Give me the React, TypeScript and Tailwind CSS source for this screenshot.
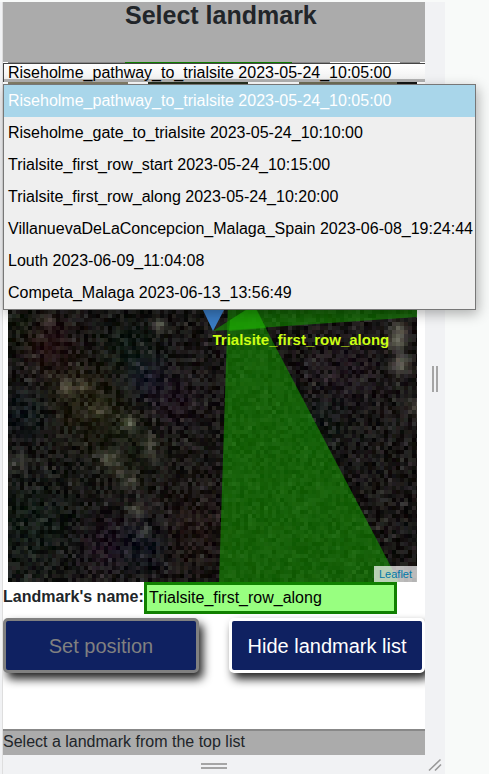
import { useState } from "react";

const landmarks = [
  "Riseholme_pathway_to_trialsite 2023-05-24_10:05:00",
  "Riseholme_gate_to_trialsite 2023-05-24_10:10:00",
  "Trialsite_first_row_start 2023-05-24_10:15:00",
  "Trialsite_first_row_along 2023-05-24_10:20:00",
  "VillanuevaDeLaConcepcion_Malaga_Spain 2023-06-08_19:24:44",
  "Louth 2023-06-09_11:04:08",
  "Competa_Malaga 2023-06-13_13:56:49",
];

const MAP_W = 409;
const MAP_H = 500;
const CELL = 4;

// Bright patches of ground: x, y, radius, strength
const patches = [
  [38, 236, 7, 42], [150, 241, 7, 65], [56, 303, 8, 60], [74, 302, 7, 52],
  [90, 326, 11, 32], [119, 338, 8, 55], [140, 358, 7, 45], [99, 374, 10, 55],
  [120, 398, 9, 40], [127, 426, 7, 55], [135, 448, 7, 48], [9, 378, 9, 34],
  [387, 258, 9, 72], [391, 280, 10, 68], [407, 322, 9, 55], [388, 244, 8, 60],
  [110, 388, 8, 30], [142, 373, 10, 25],
];

// Coloured casts over the dark ground: x, y, radius, red, green, blue
const casts = [
  [38, 260, 26, 13, -4, 1], [70, 315, 40, 6, 4, -6], [135, 295, 20, -2, 0, 13],
  [20, 440, 50, -6, 4, 0], [95, 460, 26, 5, -4, 7], [135, 460, 26, -8, 0, 8],
  [160, 320, 28, 4, -4, 7], [310, 340, 30, -4, 4, 1], [330, 290, 40, 4, -1, 5],
  [15, 330, 26, -7, 1, 6], [120, 350, 45, 0, 5, -3], [180, 450, 40, 5, -2, -3],
  [120, 265, 30, -5, 5, 1], [12, 245, 24, -3, 5, -3],
];

function buildTerrain() {
  let seed = 20230524;
  const rand = () => {
    seed = (seed * 1664525 + 1013904223) % 4294967296;
    return seed / 4294967296;
  };
  const groups = new Map<string, string>();
  for (let y = 220; y < MAP_H; y += CELL) {
    for (let x = 0; x < MAP_W; x += CELL) {
      let v = 2 + rand() * 36 + (rand() > 0.9 ? 16 : 0);
      let r = 3 + rand() * 5 - 2;
      let g = 1 + rand() * 5 - 2;
      let b = rand() * 5 - 2;
      for (const [px, py, rad, s] of patches) {
        const d = ((x - px) ** 2 + (y - py) ** 2) / (rad * rad);
        if (d < 4) {
          const k = s * Math.exp(-d * 1.2);
          v += k;
          b -= k * 0.15;
        }
      }
      for (const [px, py, rad, cr, cg, cb] of casts) {
        const k = Math.exp(-((x - px) ** 2 + (y - py) ** 2) / (rad * rad));
        r += cr * k;
        g += cg * k;
        b += cb * k;
      }
      const q = (n: number) => Math.max(0, Math.round(n / 4) * 4);
      const fill = `rgb(${q(v + r)},${q(v + g)},${q(v + b)})`;
      groups.set(fill, (groups.get(fill) ?? "") + `M${x} ${y}h4v4h-4z`);
    }
  }
  return [...groups.entries()];
}

const terrain = buildTerrain();

function LandmarkMap() {
  return (
    <div className="relative mr-2 ml-[5px] h-[500px] overflow-hidden bg-black">
      <svg
        className="block h-full w-full"
        viewBox={`0 0 ${MAP_W} ${MAP_H}`}
        preserveAspectRatio="xMidYMid slice"
        role="img"
        aria-label="Satellite map"
      >
        <rect width={MAP_W} height={MAP_H} fill="#151614" />
        <rect width="120" height="3" fill="#85806a" />
        <rect x="120" width="20" height="3" fill="#fff" />
        <rect x="140" width="100" height="3" fill="#27301f" />
        <rect x="240" width="51" height="3" fill="#fff" />
        <rect x="291" width="98" height="3" fill="#706f58" />
        <g shapeRendering="crispEdges">
          {terrain.map(([fill, d]) => (
            <path key={fill} d={d} fill={fill} />
          ))}
        </g>
        <polygon points="220,220 211,500 391,500 244,220" fill="#149600" fillOpacity="0.58" />
        <polygon points="205,249 250,220 409,220 409,235" fill="#149600" fillOpacity="0.58" />
        <polygon points="222,238 238,228 249,228 258,246 221,249" fill="#24b408" fillOpacity="0.5" />
        <polygon points="194,226 217,226 205,249" fill="#3a7cc4" />
      </svg>
      <span className="absolute top-[249px] left-1/2 text-[15px] leading-[18px] font-bold whitespace-nowrap text-[#ccff14]">
        Trialsite_first_row_along
      </span>
      <div className="absolute right-0 bottom-0 bg-white/70 px-[5px] text-[11px] leading-4">
        <a href="#leaflet" className="text-[#0078a8]">Leaflet</a>
      </div>
    </div>
  );
}

export default function App() {
  const [selected, setSelected] = useState(landmarks[0]);
  const [name, setName] = useState("Trialsite_first_row_along");

  return (
    <div className="min-h-screen overflow-hidden bg-[#f8faf9] pt-[2px] pr-11 font-['Liberation_Sans',Arial,sans-serif] text-base text-[#212529]">
      <div className="flex bg-[#f1f2f4]">
        <div className="w-[3px] border-r border-[#dedede]" />
        <div className="relative min-w-0 flex-1">
          <main className="overflow-hidden bg-white">
            <header className="h-[60px] bg-[#ababab] pl-[122px]">
              <h1 className="text-[25px] leading-[27px] font-bold whitespace-nowrap">Select landmark</h1>
            </header>
            <div className="flex h-px bg-white pl-[5px]">
              <div className="w-[117px] bg-[#888]" />
              <div className="w-[167px] bg-[#108000]" />
              <div className="w-[38px] bg-[#888]" />
              <div className="ml-[70px] w-5 bg-[#888]" />
            </div>
            <select
              aria-label="Landmark"
              value={selected}
              onChange={(e) => setSelected(e.target.value)}
              className="block h-[19px] w-full appearance-none border-t border-l border-[#444] bg-[linear-gradient(to_bottom,#fff_0,#f2f2f2_15px,#b2b2b2_15px)] px-1 text-base leading-[18px] text-black"
            >
              {landmarks.map((l) => (
                <option key={l}>{l}</option>
              ))}
            </select>
            <LandmarkMap />
            <div className="flex h-8 items-stretch">
              <label htmlFor="name" className="w-[141px] leading-[30px] font-bold whitespace-nowrap">
                Landmark's name:
              </label>
              <input
                id="name"
                value={name}
                onChange={(e) => setName(e.target.value)}
                className="mr-7 min-w-0 flex-1 border-3 border-[#108000] bg-[#98ff80] px-[2px] text-black outline-none"
              />
            </div>
            <div className="mt-1 flex h-[111px] items-start gap-[30px]">
              <button
                disabled
                className="h-[55px] flex-1 rounded-[5px] border-3 border-[#808080] bg-[#0f2161] text-xl whitespace-nowrap text-[#808080] shadow-[4px_6px_10px_#222]"
              >
                Set position
              </button>
              <button className="h-[55px] flex-1 rounded-[5px] border-3 border-white bg-[#0f2161] text-xl whitespace-nowrap text-white shadow-[4px_6px_10px_#222]">
                Hide landmark list
              </button>
            </div>
            <footer className="h-[26px] border-t-2 border-[#888] bg-[#ababab] leading-[22px]">
              Select a landmark from the top list
            </footer>
          </main>
          <ul
            role="listbox"
            aria-label="Landmarks"
            className="absolute top-[82px] left-0 border border-[#777] bg-[#efefef] text-black shadow-[2px_4px_12px_rgba(0,0,0,0.3)]"
          >
            {landmarks.map((l) => (
              <li
                key={l}
                role="option"
                aria-selected={l === selected}
                onClick={() => setSelected(l)}
                className={`h-8 pr-[2px] pl-1 leading-[31px] whitespace-nowrap ${l === selected ? "bg-[#a9d6ea] text-white" : ""}`}
              >
                {l}
              </li>
            ))}
          </ul>
          <div className="flex h-[19px] items-center justify-center">
            <div className="mt-[3px] h-[6px] w-[26px] border-y-2 border-[#a5a5a5]" />
          </div>
        </div>
        <div className="flex w-5 flex-col items-center">
          <div className="flex flex-1 items-center">
            <div className="h-[26px] w-[6px] border-x-2 border-[#a5a5a5]" />
          </div>
          <svg className="h-[19px] w-5" viewBox="0 0 20 19" fill="none" stroke="#999" strokeWidth="1.6" aria-hidden="true">
            <path d="M4 15.500L15.500 4.500M10 15.500L16 9.500" />
          </svg>
        </div>
      </div>
    </div>
  );
}
